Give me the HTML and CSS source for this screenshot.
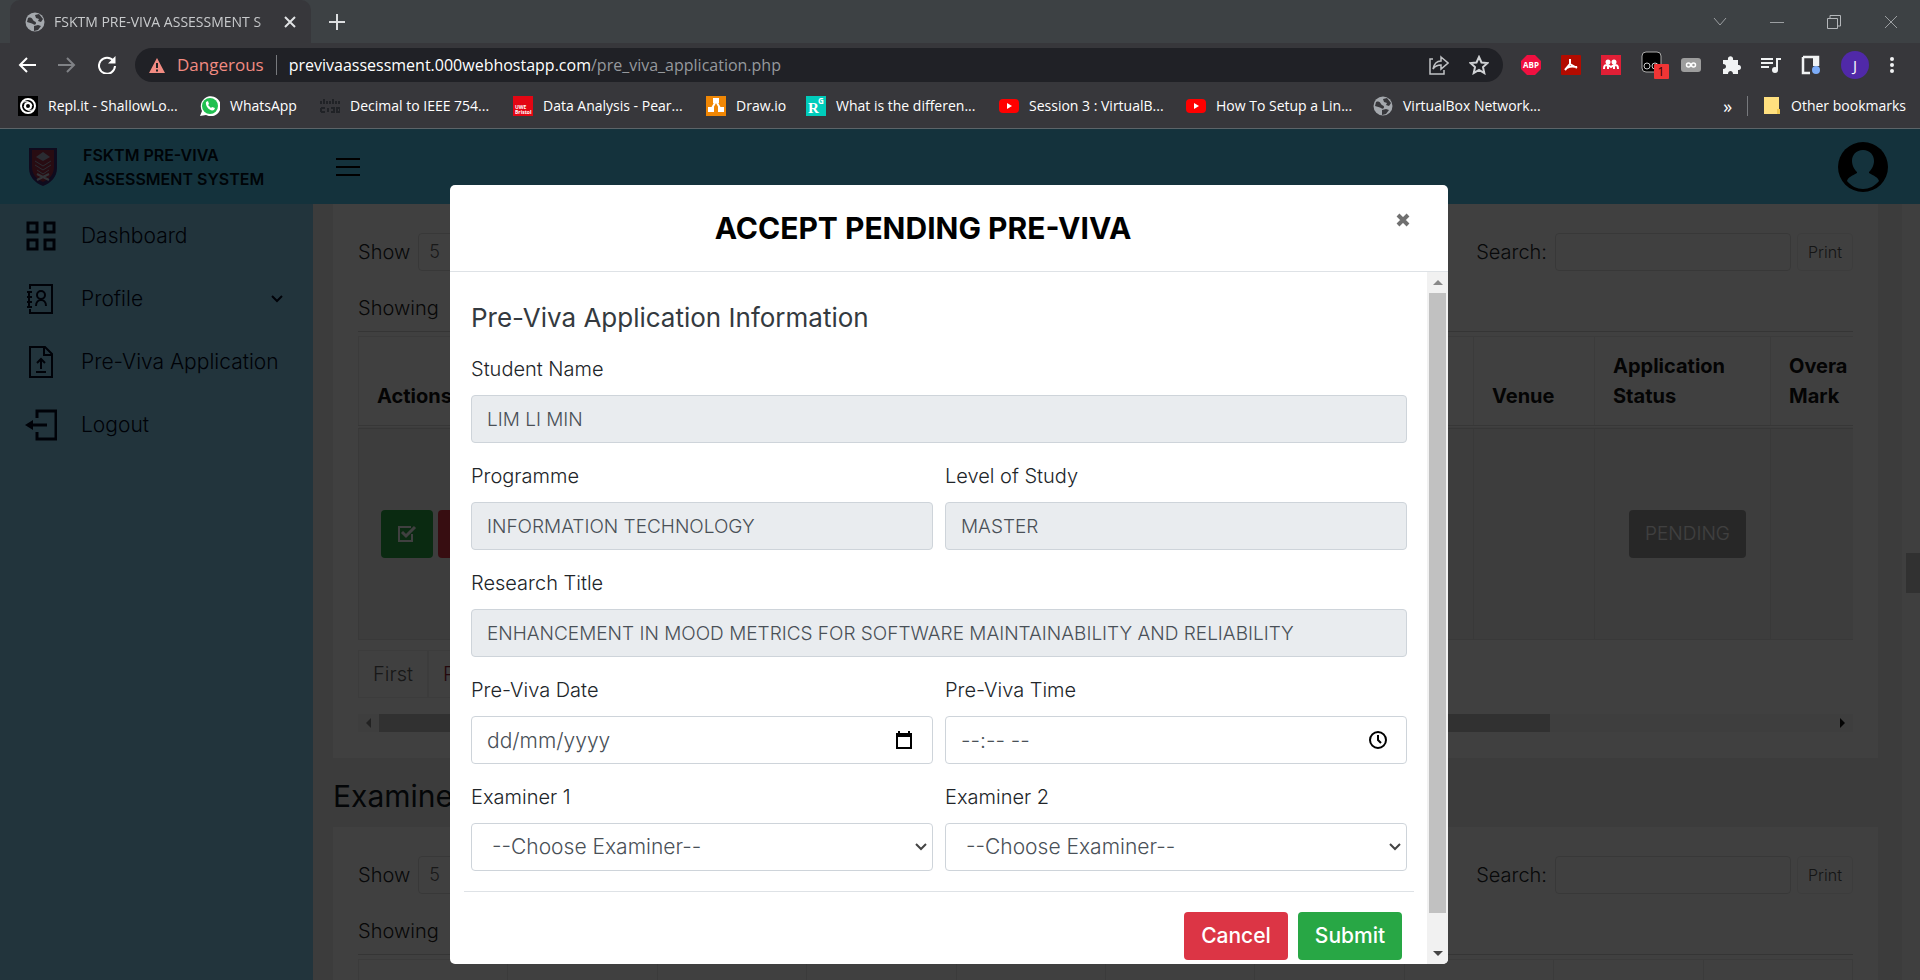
FILE: index.html
```html
<!DOCTYPE html>
<html lang="en">
<head>
<meta charset="utf-8">
<title>FSKTM PRE-VIVA ASSESSMENT SYSTEM</title>
<link rel="stylesheet" href="styles.css">
</head>
<body>
<svg class="defs" aria-hidden="true">
  <symbol id="globe" viewBox="0 0 20 20"><circle cx="10" cy="10" r="9.5" fill="#a4a8ad"/><path d="M3 6c3-1 4 0 5 2s3 1 3 3-2 2-3 1-4-1-6-2zM10 3l4-1 4 5-2 3-3-1 1-2-3-1zM9 14l4-1 3 1-3 4-4 1z" fill="#37373b"/></symbol>
  <symbol id="youtube" viewBox="0 0 20 20"><rect y="3" width="20" height="14" rx="4" fill="#f00"/><path d="M8 7v6l5-3z" fill="#fff"/></symbol>
</svg>

<div class="browser">
  <div class="tabs">
    <div class="tab">
      <svg class="fav"><use href="#globe"/></svg>
      <span class="tab-title">FSKTM PRE-VIVA ASSESSMENT S</span>
      <button class="plain" aria-label="Close tab"><svg width="12" height="12" viewBox="0 0 12 12"><path d="M1 1l10 10M11 1L1 11" stroke="#e0e2e4" stroke-width="2"/></svg></button>
    </div>
    <button class="plain new-tab" aria-label="New tab"><svg width="16" height="16" viewBox="0 0 16 16"><path d="M8 0v16M0 8h16" stroke="#dcdee0" stroke-width="2"/></svg></button>
    <div class="window-controls">
      <button class="plain" aria-label="Search tabs"><svg width="14" height="14" viewBox="0 0 14 14"><path d="M1 3l6 7 6-7" stroke="#9c9fa2" fill="none"/></svg></button>
      <button class="plain" aria-label="Minimize"><svg width="14" height="14" viewBox="0 0 14 14"><path d="M0 7.500h14" stroke="#9c9fa2"/></svg></button>
      <button class="plain" aria-label="Restore"><svg width="14" height="14" viewBox="0 0 14 14"><path d="M.5 3.500h10v10h-10zM3 3V.5h10.500v10.500H11" stroke="#b4b7ba" fill="none"/></svg></button>
      <button class="plain" aria-label="Close"><svg width="14" height="14" viewBox="0 0 14 14"><path d="M1 1l12 12M13 1L1 13" stroke="#9c9fa2"/></svg></button>
    </div>
  </div>

  <div class="toolbar">
    <div class="nav">
      <button class="plain" aria-label="Back"><svg width="18" height="16" viewBox="0 0 18 16"><path d="M18 8H2M9 1L2 8l7 7" stroke="#fff" stroke-width="2" fill="none"/></svg></button>
      <button class="plain" aria-label="Forward"><svg width="18" height="16" viewBox="0 0 18 16"><path d="M0 8h16M9 1l7 7-7 7" stroke="#808286" stroke-width="2" fill="none"/></svg></button>
      <button class="plain" aria-label="Reload"><svg width="18" height="18" viewBox="0 0 18 18"><path d="M15.500 5A8 8 0 1 0 17 10" stroke="#fff" stroke-width="2" fill="none"/><path d="M17.500 0v7.500H10z" fill="#fff"/></svg></button>
    </div>
    <div class="omnibox">
      <svg width="16" height="15" viewBox="0 0 16 15"><path d="M8 0l8 15H0z" fill="#f28b82"/><path d="M8 5v5M8 11.500v2" stroke="#202124" stroke-width="2"/></svg>
      <span class="danger">Dangerous</span>
      <span class="rule"></span>
      <span class="url"><span class="host">previvaassessment.000webhostapp.com</span>/pre_viva_application.php</span>
      <button class="plain" aria-label="Share"><svg width="20" height="20" viewBox="0 0 20 20"><path d="M4 4H1v15h14v-4" stroke="#c0c2c5" stroke-width="1.500" fill="none"/><path d="M12 2l7 6-7 6v-4c-4 0-6 1-8 4 1-5 4-8 8-8z" stroke="#c0c2c5" stroke-width="1.500" fill="none"/></svg></button>
      <button class="plain" aria-label="Bookmark"><svg width="20" height="20" viewBox="0 0 20 20"><path d="M10 2l2.500 5.500 6 .6-4.500 4 1.300 6L10 15l-5.300 3.100 1.300-6-4.500-4 6-.6z" stroke="#d0d2d5" stroke-width="2" fill="none"/></svg></button>
    </div>
    <div class="extensions">
      <svg width="20" height="20" viewBox="0 0 20 20"><path d="M6 0h8l6 6v8l-6 6H6l-6-6V6z" fill="#f01040"/><text x="10" y="13" class="abp">ABP</text></svg>
      <svg width="20" height="20" viewBox="0 0 20 20"><rect width="20" height="20" rx="1" fill="#b30b00"/><path d="M9 4v5l-5 6M9 9l7 4M6 13c3-2 6-2 10-1" fill="none" stroke="#fff" stroke-width="2"/></svg>
      <svg width="20" height="20" viewBox="0 0 20 20"><rect width="20" height="20" fill="#e01f36"/><circle cx="7" cy="7" r="2.500" fill="#fff"/><circle cx="13" cy="7" r="2.500" fill="#fff"/><path d="M3 14c0-4 1-4 4-4l3 2 3-2c3 0 4 0 4 4M7 10v4M13 10v4" fill="none" stroke="#fff" stroke-width="2"/></svg>
      <svg class="ext-wide" width="28" height="28" viewBox="0 0 28 28"><rect x="1" y="1" width="19" height="20" rx="4" fill="#000" stroke="#aaa"/><circle cx="6" cy="15" r="3" fill="none" stroke="#ccc"/><circle cx="14" cy="15" r="3" fill="none" stroke="#ccc"/><rect x="13" y="13" width="15" height="15" rx="1" fill="#f03535"/><text x="20" y="25" class="ext-count">1</text></svg>
      <svg width="20" height="20" viewBox="0 0 20 20"><rect y="3" width="20" height="14" rx="3" fill="#9d9d9d"/><circle cx="7.500" cy="10" r="2" fill="none" stroke="#fff" stroke-width="1.500"/><circle cx="12.500" cy="10" r="2" fill="none" stroke="#fff" stroke-width="1.500"/></svg>
      <svg width="20" height="20" viewBox="0 0 20 20"><path d="M2 5h5c-1-5 6-5 5 0h5v5c4-1 4 6 0 5v4h-5c0-4-5-4-5 0H2v-5c4 0 4-5 0-5z" fill="#f1f3f4"/></svg>
      <svg width="20" height="20" viewBox="0 0 20 20"><path d="M0 4h12M0 8h12M0 12h8" stroke="#f1f3f4" stroke-width="2"/><path d="M16 15V4h4" stroke="#f1f3f4" stroke-width="2" fill="none"/><circle cx="14" cy="15" r="3" fill="#f1f3f4"/></svg>
      <svg width="20" height="20" viewBox="0 0 20 20"><path d="M2 2h15v9M9 18H2V2" stroke="#f1f3f4" stroke-width="2.500" fill="none"/><path d="M12 2h6v9h-6z" fill="#f1f3f4"/><circle cx="15" cy="15" r="4" fill="#7cacf8"/></svg>
      <span class="avatar">J</span>
      <svg width="6" height="20" viewBox="0 0 6 20"><circle cx="3" cy="4" r="2" fill="#f1f3f4"/><circle cx="3" cy="10" r="2" fill="#f1f3f4"/><circle cx="3" cy="16" r="2" fill="#f1f3f4"/></svg>
    </div>
  </div>

  <div class="bookmarks">
    <a class="bm bm-first" href="#"><svg class="fav" viewBox="0 0 20 20"><rect width="20" height="20" fill="#000"/><circle cx="10" cy="10" r="7" fill="none" stroke="#fff" stroke-width="2"/><circle cx="10" cy="10" r="3" fill="none" stroke="#fff" stroke-width="2"/><path d="M4 7c4-3 9-1 10 3M16 13c-4 3-9 1-10-3" stroke="#fff" fill="none"/></svg>Repl.it - ShallowLo...</a>
    <a class="bm bm-s" href="#"><svg class="fav" viewBox="0 0 20 20"><path d="M0 20l2-5A10 10 0 1 1 6 19z" fill="#fff"/><circle cx="10" cy="10" r="8" fill="#20c050"/><path d="M6 6l2-1 1 3-1 1 3 3 1-1 3 1-1 2c-4 2-9-4-8-8z" fill="#fff"/></svg>WhatsApp</a>
    <a class="bm bm-l" href="#"><svg class="fav" viewBox="0 0 20 20"><path d="M1 5v3M4 3v5M7 5v3M10 5v3M13 3v5M16 5v3M19 5v3M1 12h4M1 16h4M1 12v4M8 12v4M11 12h3v4h-3M17 12h3v4h-3z" stroke="#202226" stroke-width="2" fill="none"/></svg>Decimal to IEEE 754...</a>
    <a class="bm bm-l" href="#"><svg class="fav" viewBox="0 0 20 20"><rect width="20" height="20" fill="#e30613"/><text x="2" y="13" class="uwe">UWE</text><text x="2" y="18" class="uwe">Bristol</text></svg>Data Analysis - Pear...</a>
    <a class="bm bm-xs" href="#"><svg class="fav" viewBox="0 0 20 20"><rect width="20" height="20" fill="#f08705"/><path d="M10 5L5 14M10 5l5 9" stroke="#fff" stroke-width="2"/><path d="M7 2h6v5H7zM2 11h6v5H2zM12 11h6v5h-6z" fill="#fff"/></svg>Draw.io</a>
    <a class="bm bm-l" href="#"><svg class="fav" viewBox="0 0 20 20"><rect width="20" height="20" fill="#0cb"/><text x="2" y="17" class="rg">R</text><text x="12" y="8" class="rg-sup">G</text></svg>What is the differen...</a>
    <a class="bm bm-m" href="#"><svg class="fav"><use href="#youtube"/></svg>Session 3 : VirtualB...</a>
    <a class="bm bm-m" href="#"><svg class="fav"><use href="#youtube"/></svg>How To Setup a Lin...</a>
    <a class="bm bm-m" href="#"><svg class="fav"><use href="#globe"/></svg>VirtualBox Network...</a>
    <div class="bm-end">
      <button class="plain more" aria-label="More bookmarks">»</button>
      <span class="rule"></span>
      <a class="bm" href="#"><svg width="18" height="20" viewBox="0 0 18 20"><path d="M1 1h15v12l1 5H1z" fill="#ffe07f"/><path d="M14 13h3v5h-3z" fill="#f0c850"/></svg>Other bookmarks</a>
    </div>
  </div>
</div>

<div class="app">
  <header class="topbar">
    <div class="brand">
      <svg width="30" height="40" viewBox="0 0 30 40"><path d="M1 1h28v20c0 9-6 15-14 18C7 36 1 30 1 21z" fill="#3c2c78"/><path d="M4 3h22v17c0 8-5 12-11 15C9 32 4 28 4 20z" fill="#a03048"/><path d="M8 10l7-5 7 5-7 4z" fill="#a8b0c8"/><path d="M7 14l8 5 8-5M7 18l8 5 8-5M9 23l6 4 6-4" fill="none" stroke="#a8b0c8"/><path d="M9 27l12 6M21 27L9 33" stroke="#c8d0e0" stroke-width="2"/></svg>
      <span>FSKTM PRE-VIVA ASSESSMENT SYSTEM</span>
    </div>
    <button class="plain burger" aria-label="Toggle menu"><svg width="24" height="20" viewBox="0 0 24 20"><path d="M0 2h24M0 10h24M0 18h24" stroke="#000" stroke-width="2"/></svg></button>
    <svg class="user" width="50" height="50" viewBox="0 0 50 50"><circle cx="25" cy="25" r="25" fill="#000"/><path d="M25 8c7 0 11 5 11 11 0 5-3 9-5 11v1c5 3 9 4 10 8-4 5-10 8-16 8s-12-3-16-8c1-4 5-5 10-8v-1c-2-2-5-6-5-11 0-6 4-11 11-11z" fill="#50c8f0"/></svg>
  </header>

  <div class="columns">
    <nav class="sidebar">
      <a href="#"><svg width="32" height="32" viewBox="0 0 32 32"><path d="M3 3h9v9H3zM20 3h9v9h-9zM3 20h9v9H3zM20 20h9v9h-9z" fill="none" stroke="#000820" stroke-width="3"/></svg><span>Dashboard</span></a>
      <a href="#"><svg width="32" height="32" viewBox="0 0 32 32"><path d="M5 6V2h22v28H5v-4M2 9h5M2 14h5M2 19h5M2 24h5M4 9v15" fill="none" stroke="#000820" stroke-width="2"/><circle cx="16" cy="12" r="4" fill="none" stroke="#000820" stroke-width="2"/><path d="M11 23c0-8 10-8 10 0" fill="none" stroke="#000820" stroke-width="2"/></svg><span>Profile</span><svg class="chev" width="12" height="8" viewBox="0 0 12 8"><path d="M1 1l5 5 5-5" fill="none" stroke="#000820" stroke-width="2"/></svg></a>
      <a href="#"><svg width="32" height="32" viewBox="0 0 32 32"><path d="M5 1h15l7 7v23H5zM19 1v8h8M11 26h10M16 23v-9M12 17l4-4 4 4" fill="none" stroke="#000820" stroke-width="2"/></svg><span>Pre-Viva Application</span></a>
      <a href="#"><svg width="32" height="32" viewBox="0 0 32 32"><path d="M12 9V2h19v28H12v-7" fill="none" stroke="#000820" stroke-width="3"/><path d="M22 16H4" stroke="#000820" stroke-width="3"/><path d="M0 16l8-5v10z" fill="#000820"/></svg><span>Logout</span></a>
    </nav>

    <main class="main">
      <section class="card">
        <div class="tools">
          <label class="length">Show <select><option>5</option></select></label>
          <label class="search">Search: <input type="search"></label>
          <button class="print">Print</button>
        </div>
        <p class="info">Showing</p>
        <div class="table-wrap">
          <table class="grid">
            <colgroup><col><col class="c-venue"><col class="c-status"><col class="c-mark"></colgroup>
            <thead><tr><th>Actions</th><th>Venue</th><th>Application Status</th><th>Overa<br>Mark</th></tr></thead>
            <tbody><tr>
              <td><div class="actions">
                <button class="btn btn-green" aria-label="Accept"><svg width="20" height="18" viewBox="0 0 20 18"><path d="M15 9v7H2V2h12" fill="none" stroke="#fff" stroke-width="2"/><path d="M5 7l4 4 9-9" fill="none" stroke="#fff" stroke-width="3"/></svg></button>
                <button class="btn btn-red" aria-label="Reject"></button>
              </div></td>
              <td></td>
              <td class="center"><button class="btn btn-grey" disabled>PENDING</button></td>
              <td></td>
            </tr></tbody>
          </table>
        </div>
        <div class="pager"><button>First</button><button>P</button></div>
        <div class="hscroll"><span class="tri-left"></span><span class="hthumb"></span><span class="tri-right"></span></div>
      </section>

      <h2 class="section-title">Examiner</h2>

      <section class="card">
        <div class="tools">
          <label class="length">Show <select><option>5</option></select></label>
          <label class="search">Search: <input type="search"></label>
          <button class="print">Print</button>
        </div>
        <p class="info">Showing</p>
        <div class="table-wrap">
          <table class="grid grid-second">
            <thead><tr><th></th><th></th><th></th><th></th><th></th><th></th><th></th><th></th><th></th><th></th></tr></thead>
          </table>
        </div>
      </section>
    </main>
    <div class="page-scroll"><span class="page-thumb"></span></div>
  </div>

  <div class="backdrop">
    <form class="modal" role="dialog" aria-labelledby="modal-title">
      <div class="modal-head">
        <h1 id="modal-title">ACCEPT PENDING PRE-VIVA</h1>
        <button type="button" class="plain modal-close" aria-label="Close dialog"><svg width="14" height="14" viewBox="0 0 14 14"><path d="M2 2l10 10M12 2L2 12" stroke="#707070" stroke-width="4"/></svg></button>
      </div>
      <div class="modal-scroll">
        <div class="modal-body">
          <h2>Pre-Viva Application Information</h2>
          <div class="fields">
            <div class="field wide"><label for="student">Student Name</label><input id="student" value="LIM LI MIN" readonly></div>
            <div class="field"><label for="programme">Programme</label><input id="programme" value="INFORMATION TECHNOLOGY" readonly></div>
            <div class="field"><label for="level">Level of Study</label><input id="level" value="MASTER" readonly></div>
            <div class="field wide"><label for="research">Research Title</label><input id="research" value="ENHANCEMENT IN MOOD METRICS FOR SOFTWARE MAINTAINABILITY AND RELIABILITY" readonly></div>
            <div class="field"><label for="date">Pre-Viva Date</label><div class="picker"><input id="date" value="dd/mm/yyyy"><svg width="18" height="20" viewBox="0 0 18 20"><path d="M2 4h14v14H2z" fill="none" stroke="#000" stroke-width="2"/><path d="M1 3h16v4H1zM3 1h2v3H3zM13 1h2v3h-2z"/></svg></div></div>
            <div class="field"><label for="time">Pre-Viva Time</label><div class="picker"><input id="time" value="--:-- --"><svg width="18" height="20" viewBox="0 0 18 20"><circle cx="9" cy="10" r="8" fill="none" stroke="#000" stroke-width="2"/><path d="M9 5v5l3 3" fill="none" stroke="#000" stroke-width="2"/></svg></div></div>
            <div class="field"><label for="ex1">Examiner 1</label><div class="picker chooser"><select id="ex1"><option>--Choose Examiner--</option></select><svg width="12" height="8" viewBox="0 0 12 8"><path d="M1 1l5 5 5-5" fill="none" stroke="#444" stroke-width="2"/></svg></div></div>
            <div class="field"><label for="ex2">Examiner 2</label><div class="picker chooser"><select id="ex2"><option>--Choose Examiner--</option></select><svg width="12" height="8" viewBox="0 0 12 8"><path d="M1 1l5 5 5-5" fill="none" stroke="#444" stroke-width="2"/></svg></div></div>
          </div>
          <div class="modal-foot">
            <button type="button" class="btn btn-red">Cancel</button>
            <button type="button" class="btn btn-green">Submit</button>
          </div>
        </div>
        <div class="vscroll"><span class="tri-up"></span><span class="vthumb"></span><span class="tri-down"></span></div>
      </div>
    </form>
  </div>
</div>
</body>
</html>
```

FILE: styles.css
```css
* { box-sizing: border-box; }
body {
  margin: 0;
  height: 100vh;
  overflow: hidden;
  display: flex;
  flex-direction: column;
  font: 300 20px/30px Inter, "Open Sans", sans-serif;
  color: #212529;
}
h1, h2, p { margin: 0; }
a { color: inherit; text-decoration: none; }
button, input, select { font: inherit; color: inherit; margin: 0; }
svg { flex: none; display: block; }
.defs { position: absolute; width: 0; height: 0; }
.plain { border: 0; padding: 0; background: none; flex: none; }

/* browser frame */
.browser { flex: none; background: #37373b; color: #fff; font: 14px/20px "Open Sans", sans-serif; border-bottom: 1px solid #5c6468; }
.tabs { display: flex; align-items: center; height: 43px; background: #3d4144; padding-left: 10px; }
.tab { width: 301px; height: 43px; display: flex; align-items: center; gap: 9px; padding: 0 15px; background: #37373b; border-radius: 10px 10px 0 0; color: #c8cacc; }
.fav { width: 20px; height: 20px; }
.tab-title { flex: 1; min-width: 0; white-space: nowrap; mask-image: linear-gradient(90deg, #000 92%, transparent); }
.new-tab { margin-left: 18px; }
.window-controls { margin-left: auto; display: flex; gap: 43px; padding-right: 22px; }
.toolbar { display: flex; align-items: center; padding: 5px 25px 6px 18px; }
.nav { display: flex; align-items: center; gap: 22px; width: 117px; }
.omnibox { flex: 1; height: 34px; display: flex; align-items: center; gap: 12px; padding: 0 14px; border-radius: 17px; background: #202126; font-size: 16px; color: #96999d; }
.danger { color: #f28b82; font-size: 17px; }
.rule { width: 1px; height: 20px; background: #77797d; }
.url { flex: 1; white-space: nowrap; }
.omnibox .plain + .plain { margin-left: 8px; }
.host { color: #fff; }
.extensions { display: flex; align-items: center; gap: 20px; padding-left: 18px; }
.ext-wide { margin-right: -8px; }
.abp { font: bold 8px "Open Sans", sans-serif; fill: #fff; text-anchor: middle; }
.ext-count { font: 12px "Open Sans", sans-serif; fill: #300; text-anchor: middle; }
.uwe { font: bold 5px "Open Sans", sans-serif; fill: #fff; }
.rg { font: bold 15px "Liberation Serif", serif; fill: #fff; }
.rg-sup { font: bold 8px "Open Sans", sans-serif; fill: #fff; }
.avatar { width: 28px; height: 28px; border-radius: 14px; background: #5029a8; text-align: center; font-size: 15px; line-height: 28px; }
.bookmarks { display: flex; height: 40px; padding: 0 14px 4px 18px; }
.bm { display: flex; align-items: center; gap: 10px; white-space: nowrap; }
.bm-first { width: 182px; }
.bm-xs { width: 100px; }
.bm-s { width: 120px; }
.bm-m { width: 187px; }
.bm-l { width: 193px; }
.bm-end { margin-left: auto; display: flex; align-items: center; gap: 15px; }
.more { font-size: 18px; }

/* application */
.app { flex: 1; min-height: 0; position: relative; display: flex; flex-direction: column; }
.topbar { flex: none; height: 75px; display: flex; align-items: center; background: #50c8f0; padding: 0 32px 0 28px; }
.brand { width: 308px; display: flex; align-items: center; gap: 25px; font-size: 16px; line-height: 24px; font-weight: 600; color: #001020; }
.brand span { width: 200px; }
.user { margin-left: auto; }
.columns { flex: 1; min-height: 0; display: flex; }
.sidebar { flex: none; width: 313px; background: #88d0f0; display: flex; flex-direction: column; color: #000820; font-size: 21px; }
.sidebar a { height: 63px; display: flex; align-items: center; gap: 24px; padding: 0 30px 0 25px; }
.chev { margin-left: auto; }
.main { flex: 1; min-width: 0; overflow: hidden; padding: 0 24px 0 20px; background: #f0f0f0; }
.page-scroll { flex: none; width: 18px; background: #fafafa; padding-top: 349px; }
.page-thumb { display: block; height: 40px; background: #c1c1c1; margin-left: 4px; }
.card { background: #fff; padding: 29px 25px 26px; }
.tools { display: flex; align-items: center; gap: 6px; height: 38px; }
.length, .search { display: flex; align-items: center; gap: 8px; }
.search { margin-left: auto; }
.length select { appearance: none; width: 70px; height: 38px; padding: 0 10px; border: 1px solid #ddd; border-radius: 4px; background: #fff; color: #666; font-size: 18px; }
.search input { width: 236px; height: 38px; border: 1px solid #ddd; border-radius: 4px; }
.print { width: 56px; height: 38px; padding: 0; border: 1px solid #f0f0f0; border-radius: 4px; background: #fff; color: #555; font-size: 16px; }
.info { padding-top: 22px; height: 60px; color: #222; }
.table-wrap { overflow: hidden; border-top: 1px solid #d4d4d4; }
.grid { width: calc(100% + 76px); table-layout: fixed; border-collapse: collapse; margin-top: 4px; border-top: 1px solid #d4d4d4; }
.grid th { height: 89px; padding: 14px 18px; text-align: left; vertical-align: bottom; border: 1px solid #eaeaea; border-bottom: 4px double #dcdcdc; color: #101010; font-weight: 700; }
.grid td { height: 212px; padding: 0 22px; border: 1px solid #e4e4e4; background: #f4f4f4; }
.grid .center { text-align: center; padding: 0 0 0 10px; }
.grid-second { width: 100%; }
.c-venue { width: 121px; }
.c-status { width: 176px; }
.c-mark { width: 158px; }
.actions { display: flex; gap: 5px; }
.btn { height: 48px; padding: 0 16px; border: 0; border-radius: 4px; color: #fff; font-weight: 500; }
.btn-green { background: #28a745; }
.btn-red { background: #dc3545; min-width: 51px; }
.btn-grey { background: #9c9c9c; font-weight: 300; font-size: 19px; }
.pager { display: flex; padding-top: 10px; }
.pager button { height: 48px; min-width: 70px; padding: 0 14px; border: 1px solid #eee; background: #fff; color: #606060; }
.pager button + button { color: #902030; text-align: left; }
.hscroll { display: flex; align-items: center; justify-content: space-between; height: 18px; margin-top: 16px; padding: 0 8px; background: #f8f8f8; }
.hthumb { flex: 1; height: 18px; background: #c4c4c4; margin: 0 290px 0 8px; }
.tri-left, .tri-right { border: 5px solid transparent; }
.tri-left { border-right-color: #888; border-left: 0; }
.tri-right { border-left-color: #111; border-right: 0; }
.section-title { padding: 18px 0 11px; font-size: 30px; line-height: 40px; font-weight: 400; color: #101820; }

/* dialog */
.backdrop { position: absolute; inset: 0; padding: 56px 24px 16px; background: rgba(0, 0, 0, .75); display: flex; justify-content: center; }
.modal { width: 998px; margin-right: 22px; display: flex; flex-direction: column; background: #fff; border-radius: 5px; overflow: hidden; }
.modal-head { display: flex; align-items: center; justify-content: center; height: 87px; border-bottom: 1px solid #dee2e6; }
.modal-head h1 { flex: 1; text-align: center; font-size: 30px; line-height: 40px; font-weight: 700; color: #000; }
.modal-close { margin: 0 38px 16px 0; }
.modal-scroll { flex: 1; min-height: 0; display: flex; }
.modal-body { flex: 1; min-width: 0; padding: 26px 20px 0 21px; }
.modal-body h2 { font-size: 26px; line-height: 40px; font-weight: 400; color: #343a40; padding-bottom: 17px; }
.fields { display: grid; grid-template-columns: 1fr 1fr; gap: 19px 12px; }
.field label { display: block; line-height: 28px; padding-bottom: 12px; }
.wide { grid-column: 1 / -1; }
.field input, .field select { width: 100%; height: 48px; padding: 0 15px; border: 1px solid #ced4da; border-radius: 4px; background: #fff; color: #495057; display: block; appearance: none; font-size: 21px; }
.field input[readonly] { background: #e9ecef; font-size: 19px; }
.field .chooser select { padding: 0 20px; }
.picker { display: flex; align-items: center; }
.picker svg { margin: 0 20px 0 -38px; }
.chooser svg { margin: 0 6px 0 -18px; }
.modal-foot { margin: 20px -7px 0; padding: 20px 12px; border-top: 1px solid #dee2e6; display: flex; justify-content: flex-end; gap: 10px; font-size: 21px; }
.modal-foot .btn { min-width: 104px; }
.vscroll { width: 21px; background: #f1f1f1; display: flex; flex-direction: column; align-items: center; padding: 8px 0; }
.vthumb { flex: 1; width: 17px; margin: 8px 0 38px; background: #c1c1c1; }
.tri-up, .tri-down { border: 5px solid transparent; }
.tri-up { border-bottom-color: #888; border-top: 0; }
.tri-down { border-top-color: #444; border-bottom: 0; }
```
